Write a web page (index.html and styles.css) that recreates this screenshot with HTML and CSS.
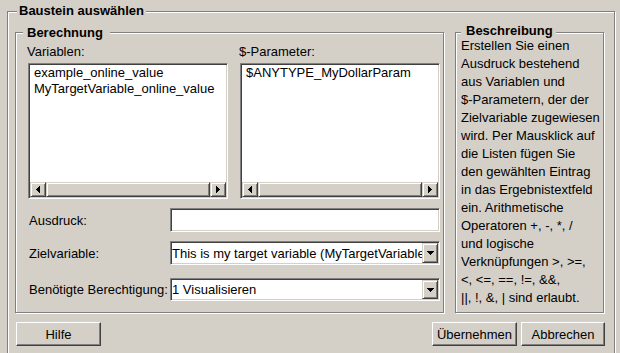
FILE: index.html
```html
<!DOCTYPE html>
<html lang="de">
<head>
<meta charset="utf-8">
<title>Baustein auswählen</title>
<link rel="stylesheet" href="styles.css">
</head>
<body>
<div class="frame outer">
  <div class="title t-outer">Baustein auswählen</div>
  <div class="main">
    <div class="frame calc">
      <div class="title t-calc">Berechnung</div>
      <div class="lists">
        <div class="col">
          <div class="lbl">Variablen:</div>
          <div class="listbox">
            <div class="items">
              <div class="item">example_online_value</div>
              <div class="item">MyTargetVariable_online_value</div>
            </div>
            <div class="hscroll">
              <div class="sbtn"><svg width="4" height="7" viewBox="0 0 4 7" shape-rendering="crispEdges"><path d="M3 0h1v7h-1zM2 1h1v5h-1zM1 2h1v3h-1zM0 3h1v1h-1z" fill="#000"/></svg></div>
              <div class="thumb"></div>
              <div class="sbtn"><svg width="4" height="7" viewBox="0 0 4 7" shape-rendering="crispEdges"><path d="M0 0h1v7h-1zM1 1h1v5h-1zM2 2h1v3h-1zM3 3h1v1h-1z" fill="#000"/></svg></div>
            </div>
          </div>
        </div>
        <div class="col">
          <div class="lbl">$-Parameter:</div>
          <div class="listbox">
            <div class="items">
              <div class="item">$ANYTYPE_MyDollarParam</div>
            </div>
            <div class="hscroll">
              <div class="sbtn"><svg width="4" height="7" viewBox="0 0 4 7" shape-rendering="crispEdges"><path d="M3 0h1v7h-1zM2 1h1v5h-1zM1 2h1v3h-1zM0 3h1v1h-1z" fill="#000"/></svg></div>
              <div class="thumb"></div>
              <div class="sbtn"><svg width="4" height="7" viewBox="0 0 4 7" shape-rendering="crispEdges"><path d="M0 0h1v7h-1zM1 1h1v5h-1zM2 2h1v3h-1zM3 3h1v1h-1z" fill="#000"/></svg></div>
            </div>
          </div>
        </div>
      </div>
      <div class="row r1">
        <span class="flbl">Ausdruck:</span>
        <div class="field"></div>
      </div>
      <div class="row r2">
        <span class="flbl">Zielvariable:</span>
        <div class="combo">
          <div class="val">This is my target variable (MyTargetVariable_online_value)</div>
          <div class="drop"><svg width="7" height="4" viewBox="0 0 7 4" shape-rendering="crispEdges"><path d="M0 0h7v1h-7zM1 1h5v1h-5zM2 2h3v1h-3zM3 3h1v1h-1z" fill="#000"/></svg></div>
        </div>
      </div>
      <div class="row r3">
        <span class="flbl">Benötigte Berechtigung:</span>
        <div class="combo">
          <div class="val">1 Visualisieren</div>
          <div class="drop"><svg width="7" height="4" viewBox="0 0 7 4" shape-rendering="crispEdges"><path d="M0 0h7v1h-7zM1 1h5v1h-5zM2 2h3v1h-3zM3 3h1v1h-1z" fill="#000"/></svg></div>
        </div>
      </div>
    </div>
    <div class="frame desc">
      <div class="title t-desc">Beschreibung</div>
      <p class="text">Erstellen Sie einen<br>Ausdruck bestehend<br>aus Variablen und<br>$-Parametern, der der<br>Zielvariable zugewiesen<br>wird. Per Mausklick auf<br>die Listen fügen Sie<br>den gewählten Eintrag<br>in das Ergebnistextfeld<br>ein. Arithmetische<br>Operatoren +, -, *, /<br>und logische<br>Verknüpfungen &gt;, &gt;=,<br>&lt;, &lt;=, ==, !=, &amp;&amp;,<br>||, !, &amp;, | sind erlaubt.</p>
    </div>
  </div>
  <div class="buttons">
    <button class="btn w85">Hilfe</button>
    <span class="spacer"></span>
    <button class="btn w85">Übernehmen</button>
    <button class="btn w84">Abbrechen</button>
  </div>
</div>
</body>
</html>
```
FILE: styles.css
```css
* { box-sizing: border-box; }
html, body { margin: 0; padding: 0; overflow: hidden; }
body {
  width: 620px;
  height: 353px;
  background: #d4d0c8;
  color: #000;
  font: 13px/15px "Liberation Sans", Arial, sans-serif;
}

/* etched group frame */
.frame {
  border: 1px solid #808080;
  box-shadow: inset 1px 1px 0 #fff, 1px 1px 0 #fff;
}
.title {
  width: max-content;
  height: 15px;
  background: #d4d0c8;
  font-weight: bold;
  white-space: nowrap;
}

.outer {
  margin: 11px 0 0 7px;
  width: 608px;
  height: 343px;
  padding: 0 10px 0 7px;
}
.t-outer { margin: -9px 0 0 2px; padding: 0 2px; }

.main {
  display: flex;
  gap: 11px;
  margin-top: 14px;
  height: 281px;
}

.calc {
  width: 429px;
  height: 281px;
  padding-left: 7px;
}
.t-calc { margin-top: -8px; padding: 0 7px 0 4px; }

.lists {
  display: grid;
  grid-template-columns: 200px 200px;
  column-gap: 12px;
  margin: 4px 0 0 5px;
}
.lbl { height: 15px; margin: 0 0 4px -1px; white-space: nowrap; }

/* sunken control border */
.listbox, .field, .combo {
  background: #fff;
  border: 1px solid;
  border-color: #808080 #fff #fff #808080;
  padding: 1px;
  box-shadow: inset 1px 1px 0 #404040, inset -1px -1px 0 #d4d0c8;
}
.listbox {
  height: 136px;
  display: flex;
  flex-direction: column;
}
.items {
  flex: 1;
  padding-left: 4px;
  line-height: 16px;
  white-space: nowrap;
  overflow: hidden;
}
.hscroll {
  height: 15px;
  display: flex;
  background: #d4d0c8;
}
.sbtn, .thumb, .drop, .btn {
  background: #d4d0c8;
  border: 1px solid;
  border-color: #d4d0c8 #404040 #404040 #d4d0c8;
  box-shadow: inset 1px 1px 0 #fff, inset -1px -1px 0 #808080;
}
.sbtn {
  width: 16px;
  display: flex;
  align-items: center;
  justify-content: center;
}
.sbtn svg, .drop svg { display: block; }
.thumb { flex: 1; }

.row {
  display: grid;
  grid-template-columns: 142px 270px;
  align-items: center;
  margin-left: 5px;
}
.r1 { margin-top: 9px; height: 24px; }
.r2 { margin-top: 9px; height: 24px; }
.r3 { margin-top: 13px; height: 23px; }
.flbl { padding-left: 1px; white-space: nowrap; }
.field { height: 24px; }
.combo {
  height: 100%;
  display: flex;
  align-items: stretch;
}
.val {
  flex: 1;
  min-width: 0;
  overflow: hidden;
  white-space: nowrap;
  display: flex;
  align-items: center;
}
.drop {
  width: 16px;
  display: flex;
  align-items: center;
  justify-content: center;
}

.desc {
  width: 149px;
  height: 281px;
  padding-left: 5px;
}
.t-desc { margin-top: -10px; padding: 0 3px 0 5px; }
.text {
  margin: -1px 0 0 0;
  line-height: 18px;
  white-space: nowrap;
}

.buttons {
  display: flex;
  gap: 4px;
  margin: 9px -1px 0 0;
  padding-left: 1px;
}
.spacer { flex: 1; }
.btn {
  height: 24px;
  padding: 0;
  font: 13px/15px "Liberation Sans", Arial, sans-serif;
  color: #000;
  border-color: #fff #404040 #404040 #fff;
  box-shadow: inset -1px -1px 0 #808080;
}
.w85 { width: 85px; }
.w84 { width: 84px; }
```
